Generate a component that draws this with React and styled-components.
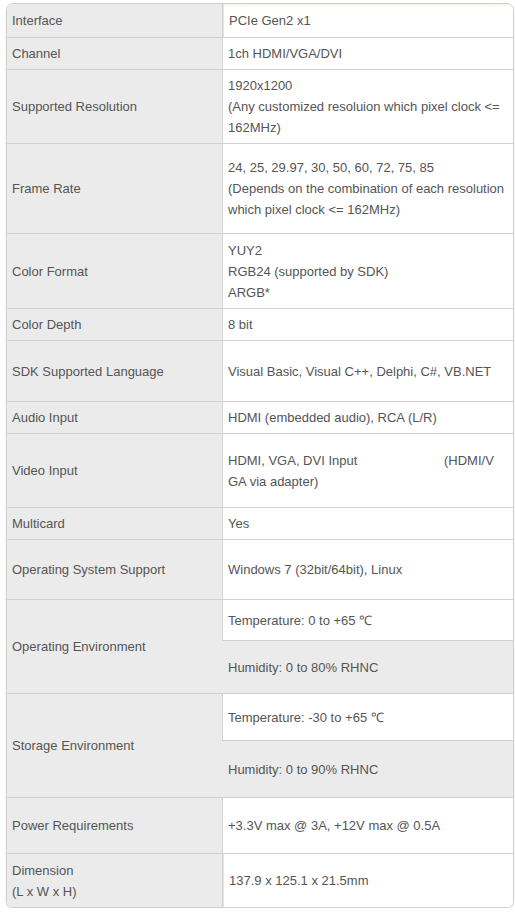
import React from "react";
import styled, { createGlobalStyle } from "styled-components";

const GlobalStyle = createGlobalStyle`
  body {
    margin: 0;
    background: #ffffff;
    font-family: "Liberation Sans", Arial, sans-serif;
  }
`;

const gap = "\u00a0".repeat(23);

const specs = [
  { label: "Interface", value: ["PCIe Gen2 x1"], h: 33, accent: "top" },
  { label: "Channel", value: ["1ch HDMI/VGA/DVI"], h: 31 },
  {
    label: "Supported Resolution",
    value: ["1920x1200", "(Any customized resoluion which pixel clock <=", "162MHz)"],
    h: 73,
  },
  {
    label: "Frame Rate",
    value: [
      "24, 25, 29.97, 30, 50, 60, 72, 75, 85",
      "(Depends on the combination of each resolution",
      "which pixel clock <= 162MHz)",
    ],
    h: 89,
  },
  { label: "Color Format", value: ["YUY2", "RGB24 (supported by SDK)", "ARGB*"], h: 74 },
  { label: "Color Depth", value: ["8 bit"], h: 31 },
  { label: "SDK Supported Language", value: ["Visual Basic, Visual C++, Delphi, C#, VB.NET"], h: 60 },
  { label: "Audio Input", value: ["HDMI (embedded audio), RCA (L/R)"], h: 31 },
  { label: "Video Input", value: ["HDMI, VGA, DVI Input" + gap + " (HDMI/V", "GA via adapter)"], h: 73 },
  { label: "Multicard", value: ["Yes"], h: 31 },
  { label: "Operating System Support", value: ["Windows 7 (32bit/64bit), Linux"], h: 59 },
  {
    label: "Operating Environment",
    split: [
      { text: "Temperature: 0 to +65 \u2103", h: 40 },
      { text: "Humidity: 0 to 80% RHNC", h: 52 },
    ],
  },
  {
    label: "Storage Environment",
    split: [
      { text: "Temperature: -30 to +65 \u2103", h: 46 },
      { text: "Humidity: 0 to 90% RHNC", h: 56 },
    ],
  },
  { label: "Power Requirements", value: ["+3.3V max @ 3A, +12V max @ 0.5A"], h: 55 },
  { label: ["Dimension", "(L x W x H)"], value: ["137.9 x 125.1 x 21.5mm"], h: 53, accent: "side", last: true },
];

const Page = styled.div`
  padding: 3px 1px 0 6px;
`;

const Frame = styled.div`
  width: 506px;
  border: 1px solid #cfcfcf;
  border-radius: 7px;
  overflow: hidden;
  box-shadow: 0 1px 2px rgba(0, 0, 0, 0.12);
`;

const Table = styled.table`
  width: 100%;
  border-collapse: separate;
  border-spacing: 0;
  table-layout: fixed;
  font-size: 13px;
  line-height: 21px;
  color: #555555;
`;

const Label = styled.td`
  width: 216px;
  box-sizing: border-box;
  padding: 0 5px;
  background: #ebebeb;
  border-right: 1px solid ${(p) => (p.$open ? "#ebebeb" : "#d2d2d2")};
  border-bottom: ${(p) => (p.$last ? "none" : "1px solid #cfcfcf")};
  vertical-align: middle;
`;

const Value = styled.td`
  height: ${(p) => p.$h}px;
  box-sizing: border-box;
  padding: 0 5px;
  background: ${(p) => (p.$shade ? "#ebebeb" : "#ffffff")};
  border-bottom: ${(p) => (p.$last ? "none" : "1px solid #cfcfcf")};
  border-left: ${(p) => (p.$accent ? "1px solid #efe2cb" : "none")};
  box-shadow: ${(p) => (p.$accent === "top" ? "inset 0 3px 3px -2px #f3e8d6" : "none")};
  vertical-align: middle;
`;

const SubValue = styled(Value)`
  position: relative;

  &::before {
    content: "";
    display: ${(p) => (p.$shade ? "none" : "block")};
    position: absolute;
    left: -1px;
    top: 0;
    bottom: -1px;
    width: 1px;
    background: #d2d2d2;
  }
`;

const Line = styled.div`
  white-space: pre;
`;

const Lines = ({ items }) =>
  (Array.isArray(items) ? items : [items]).map((t, i) => <Line key={i}>{t}</Line>);

export default function App() {
  return (
    <>
      <GlobalStyle />
      <Page>
        <Frame>
          <Table>
            <tbody>
              {specs.map((row, i) =>
                row.split ? (
                  <React.Fragment key={i}>
                    <tr>
                      <Label rowSpan={2} $open>
                        {row.label}
                      </Label>
                      <SubValue $h={row.split[0].h + 1}>{row.split[0].text}</SubValue>
                    </tr>
                    <tr>
                      <SubValue $h={row.split[1].h + 1} $shade>
                        {row.split[1].text}
                      </SubValue>
                    </tr>
                  </React.Fragment>
                ) : (
                  <tr key={i}>
                    <Label $last={row.last}>
                      <Lines items={row.label} />
                    </Label>
                    <Value $h={row.h + (row.last ? 0 : 1)} $accent={row.accent} $last={row.last}>
                      <Lines items={row.value} />
                    </Value>
                  </tr>
                )
              )}
            </tbody>
          </Table>
        </Frame>
      </Page>
    </>
  );
}
